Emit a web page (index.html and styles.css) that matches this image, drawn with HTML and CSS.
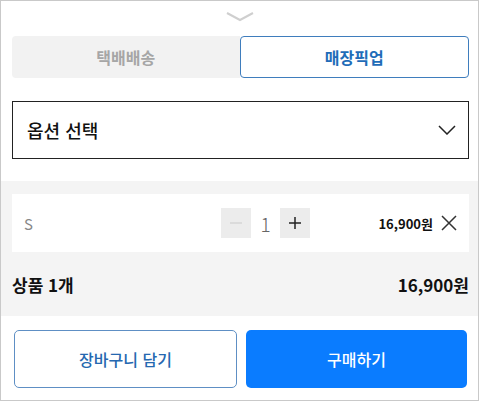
FILE: index.html
```html
<!DOCTYPE html>
<html lang="ko">
<head>
  <meta charset="UTF-8" />
  <meta name="viewport" content="width=device-width, initial-scale=1" />
  <title>옵션 선택</title>
  <link rel="stylesheet" href="styles.css">
</head>
<body>
  <div class="sheet">
    <div class="handle">
      <svg width="28" height="10" viewBox="0 0 28 10"><polyline points="1,1 14,8 27,1" fill="none" stroke="#cfcfcf" stroke-width="2"/></svg>
    </div>

    <div class="tabs">
      <button class="tab">택배배송</button>
      <button class="tab active">매장픽업</button>
    </div>

    <div class="select">
      <span>옵션 선택</span>
      <svg width="18" height="10" viewBox="0 0 18 10"><polyline points="1,1 9,9 17,1" fill="none" stroke="#222" stroke-width="1.5"/></svg>
    </div>

    <div class="cart">
      <div class="item">
        <span class="item-name">S</span>
        <div class="stepper">
          <span class="step"><svg width="14" height="14" viewBox="0 0 14 14"><path d="M1 7 H13" stroke="#d6d6d6" stroke-width="1.5"/></svg></span>
          <span class="qty">1</span>
          <span class="step"><svg width="14" height="14" viewBox="0 0 14 14"><path d="M1 7 H13 M7 1 V13" stroke="#222" stroke-width="1.5"/></svg></span>
        </div>
        <div class="item-price">
          <span>16,900원</span>
          <svg width="16" height="16" viewBox="0 0 16 16"><path d="M1 1 L15 15 M15 1 L1 15" stroke="#333" stroke-width="1.5"/></svg>
        </div>
      </div>
      <div class="total">
        <span>상품 1개</span>
        <span class="total-price">16,900원</span>
      </div>
    </div>

    <div class="actions">
      <button class="btn btn-cart">장바구니 담기</button>
      <button class="btn btn-buy">구매하기</button>
    </div>
  </div>
</body>
</html>
```

FILE: styles.css
```css
body {
  margin: 0;
  font-family: "Noto Sans CJK KR", "Noto Sans", sans-serif;
  background: #fff;
}

.sheet {
  width: 479px;
  height: 401px;
  box-sizing: border-box;
  border: 1px solid #c9c9c9;
  display: flex;
  flex-direction: column;
}

.handle {
  display: flex;
  justify-content: center;
  padding-top: 11px;
  height: 24px;
}

.tabs {
  display: flex;
  margin: 0 9px 0 11px;
  height: 42px;
}

.tab {
  flex: 1;
  border: none;
  background: #f2f2f2;
  color: #a6a6a6;
  font-family: inherit;
  font-size: 16px;
  font-weight: 700;
  border-radius: 4px 0 0 4px;
  padding: 0;
}

.tab.active {
  background: #fff;
  color: #1f6cb8;
  border: 1px solid #3f7dbd;
  border-radius: 4px;
}

.select {
  margin: 23px 9px 0 11px;
  height: 58px;
  box-sizing: border-box;
  border: 1px solid #222;
  display: flex;
  align-items: center;
  justify-content: space-between;
  padding: 0 12px 0 14px;
  font-size: 18px;
  font-weight: 500;
  color: #111;
}

.cart {
  margin-top: 22px;
  background: #f4f4f4;
  padding: 13px 9px 0 11px;
  height: 135px;
  box-sizing: border-box;
}

.item {
  background: #fff;
  height: 58px;
  display: flex;
  align-items: center;
  padding: 0 12px 0 12px;
}

.item-name {
  width: 197px;
  font-size: 15px;
  color: #888;
}

.stepper {
  display: flex;
  height: 30px;
}

.step,
.qty {
  width: 30px;
  display: flex;
  align-items: center;
  justify-content: center;
}

.step {
  background: #ececec;
}

.qty {
  width: 29px;
  background: #fff;
  color: #666;
  font-size: 19px;
  font-weight: 300;
}

.item-price {
  margin-left: auto;
  display: flex;
  align-items: center;
  gap: 8px;
  font-size: 13px;
  font-weight: 700;
  color: #111;
}

.total {
  display: flex;
  justify-content: space-between;
  align-items: center;
  height: 64px;
  font-size: 17px;
  font-weight: 700;
  color: #111;
}

.total-price {
  font-size: 17px;
}

.actions {
  display: flex;
  gap: 9px;
  margin: 14px 11px 0 13px;
  height: 58px;
}

.btn {
  flex: 1;
  border-radius: 5px;
  font-family: inherit;
  font-size: 16px;
  font-weight: 500;
  padding: 0;
}

.btn-cart {
  background: #fff;
  border: 1px solid #5e8fc4;
  color: #2568b0;
}

.btn-buy {
  background: #0a7cff;
  border: none;
  color: #fff;
}
```
